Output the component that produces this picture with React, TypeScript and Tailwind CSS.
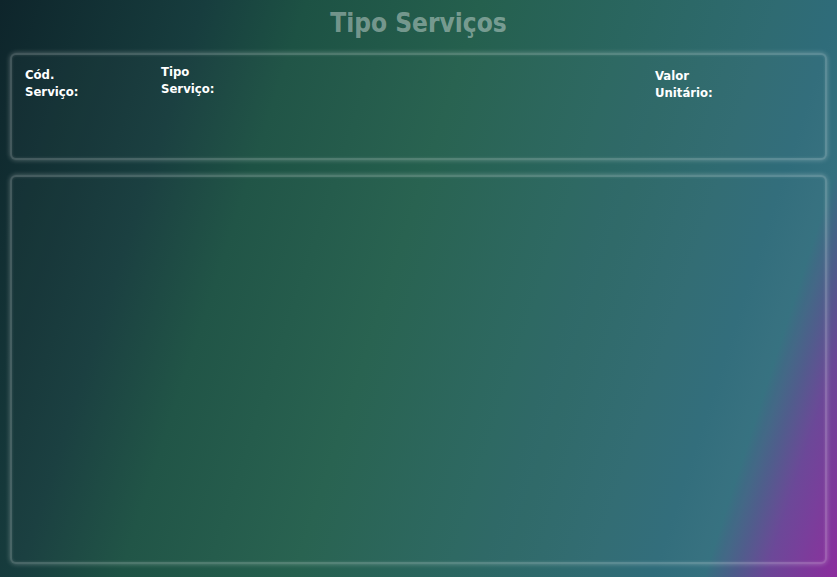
import React from "react";

const font = { fontFamily: '"DejaVu Sans Condensed", "DejaVu Sans", sans-serif' };

export default function App() {
  return (
    <div
      className="w-[837px] h-[577px] overflow-hidden flex flex-col px-[10px] pt-[8px] pb-[13px] bg-[linear-gradient(108deg,#0e252b_0%,#173d3e_20%,#1d5244_30%,#25604e_47%,#2a6660_62%,#2f6b72_76%,#2f6c7a_82%,#34707f_87%,#4d5a8a_90%,#6a4596_93%,#8c2c9e_100%)]"
      style={font}
    >
      <h1 className="h-[30px] leading-[30px] text-center text-[26px] font-bold text-white/40">
        Tipo Serviços
      </h1>
      <div className="mt-[15px] h-[107px] rounded-md border-2 border-white/20 bg-white/[0.02] shadow-[0_0_5px_rgba(255,255,255,0.3),inset_0_0_3px_rgba(255,255,255,0.15)] flex pl-[13px] text-[13px] leading-[17px] font-bold text-white">
        <div className="w-[136px] pt-[11px]">
          <div>Cód.</div>
          <div>Serviço:</div>
        </div>
        <div className="w-[494px] pt-[8px]">
          <div>Tipo</div>
          <div>Serviço:</div>
        </div>
        <div className="pt-[12px]">
          <div>Valor</div>
          <div>Unitário:</div>
        </div>
      </div>
      <div className="mt-[15px] flex-1 rounded-md border-2 border-white/20 bg-white/[0.02] shadow-[0_0_5px_rgba(255,255,255,0.3),inset_0_0_3px_rgba(255,255,255,0.15)]" />
    </div>
  );
}
